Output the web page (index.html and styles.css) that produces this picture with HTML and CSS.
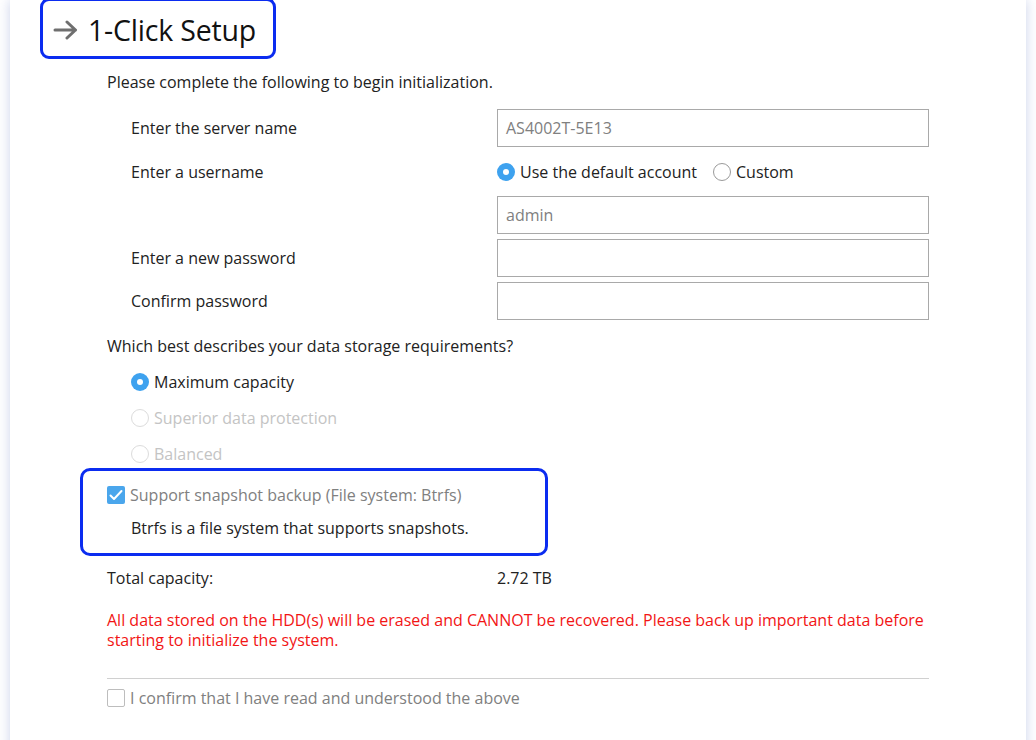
FILE: index.html
```html
<!DOCTYPE html>
<html>
<head>
<meta charset="utf-8">
<link rel="stylesheet" href="styles.css">
</head>
<body>
<div class="page">
  <div class="panel">
    <div class="title-box">
      <svg class="arrow" width="26" height="20" viewBox="0 0 26 20">
        <path d="M2 10 H22.5 M14 2 L22.5 10 L14 18" fill="none" stroke="#6f6f6f" stroke-width="3" stroke-linecap="round" stroke-linejoin="round"/>
      </svg>
      <span class="title">1-Click Setup</span>
    </div>
    <div class="content">
      <p class="intro">Please complete the following to begin initialization.</p>
      <div class="form">
        <div class="label">Enter the server name</div>
        <div class="field"><div class="input">AS4002T-5E13</div></div>
        <div class="label">Enter a username</div>
        <div class="field radios-inline">
          <span class="radio on"></span><span class="rtext">Use the default account</span>
          <span class="radio gap"></span><span class="rtext">Custom</span>
        </div>
        <div class="label"></div>
        <div class="field"><div class="input">admin</div></div>
        <div class="label">Enter a new password</div>
        <div class="field"><div class="input"></div></div>
        <div class="label">Confirm password</div>
        <div class="field"><div class="input"></div></div>
      </div>
      <p class="question">Which best describes your data storage requirements?</p>
      <div class="options">
        <div class="opt"><span class="radio on"></span><span class="otext">Maximum capacity</span></div>
        <div class="opt disabled"><span class="radio dis"></span><span class="otext">Superior data protection</span></div>
        <div class="opt disabled"><span class="radio dis"></span><span class="otext">Balanced</span></div>
      </div>
      <div class="snap-box">
        <div class="snap-row">
          <span class="check on">
            <svg width="14" height="12" viewBox="0 0 14 12"><path d="M1.5 6.5 L5 10 L12.5 2" fill="none" stroke="#fff" stroke-width="2" stroke-linecap="round" stroke-linejoin="round"/></svg>
          </span>
          <span class="snap-text">Support snapshot backup (File system: Btrfs)</span>
        </div>
        <div class="snap-desc">Btrfs is a file system that supports snapshots.</div>
      </div>
      <div class="capacity">
        <span class="cap-label">Total capacity:</span>
        <span class="cap-value">2.72 TB</span>
      </div>
      <p class="warning">All data stored on the HDD(s) will be erased and CANNOT be recovered. Please back up important data before starting to initialize the system.</p>
      <div class="divider"></div>
      <div class="confirm">
        <span class="check off"></span>
        <span class="confirm-text">I confirm that I have read and understood the above</span>
      </div>
    </div>
  </div>
</div>
</body>
</html>
```

FILE: styles.css
```css
* { box-sizing: border-box; }
html, body {
  margin: 0;
  padding: 0;
  background: #ffffff;
  font-family: "Open Sans", "Noto Sans", sans-serif;
  color: #222;
  overflow: hidden;
}
.page {
  width: 1036px;
  height: 740px;
  padding: 0 10px;
}
.panel {
  position: relative;
  background: #fff;
  height: 760px;
  box-shadow: 0 0 12px rgba(130, 148, 205, 0.42);
}
.title-box {
  position: absolute;
  left: 30px;
  top: -2px;
  width: 236px;
  height: 61px;
  border: 3px solid #0b2cf0;
  border-radius: 9px;
  background: #fff;
  display: flex;
  align-items: center;
  padding-left: 10px;
  padding-top: 2px;
}
.arrow { margin-right: 9px; }
.title {
  font-size: 28.5px;
  color: #111;
  letter-spacing: -0.2px;
}
.content {
  padding-top: 71px;
  padding-left: 97px;
  width: 928px;
}
p { margin: 0; }
.intro, .question {
  font-size: 16px;
  line-height: 22px;
  color: #222;
}
.form {
  margin-top: 16px;
  display: grid;
  grid-template-columns: 366px 432px;
  grid-template-rows: 38px 39px 38px 38px 38px;
  row-gap: 5px;
  padding-left: 24px;
}
.label {
  font-size: 16px;
  color: #222;
  display: flex;
  align-items: center;
}
.field { display: flex; align-items: center; }
.input {
  width: 432px;
  height: 38px;
  border: 1px solid #a9a9a9;
  padding: 0 8px;
  font-size: 16px;
  color: #808080;
  display: flex;
  align-items: center;
}
.radio {
  width: 18px;
  height: 18px;
  border-radius: 50%;
  display: inline-block;
  flex: none;
  position: relative;
}
.radio.on { background: #3ea2ef; }
.radio.on::after {
  content: "";
  position: absolute;
  left: 6px;
  top: 6px;
  width: 6px;
  height: 6px;
  border-radius: 50%;
  background: #fff;
}
.radio.gap {
  border: 1px solid #9a9a9a;
  margin-left: 16px;
}
.radio.dis { border: 1px solid #dcdcdc; }
.rtext {
  font-size: 16px;
  color: #222;
  margin-left: 5px;
}
.question { margin-top: 15px; }
.options {
  padding-left: 24px;
  margin-top: 7px;
}
.opt {
  height: 36px;
  display: flex;
  align-items: center;
}
.otext {
  font-size: 16px;
  margin-left: 5px;
  color: #222;
}
.opt.disabled .otext { color: #c4c4c4; }
.snap-box {
  margin-left: -27px;
  margin-top: -4px;
  width: 468px;
  height: 88px;
  border: 3px solid #0b2cf0;
  border-radius: 10px;
  padding-left: 24px;
  padding-top: 14px;
}
.snap-row {
  display: flex;
  align-items: center;
  height: 20px;
}
.check {
  width: 18px;
  height: 18px;
  border-radius: 2px;
  flex: none;
  display: inline-flex;
  align-items: center;
  justify-content: center;
}
.check.on { background: #4aa6ec; }
.check.off { border: 1px solid #bdbdbd; }
.snap-text {
  font-size: 16px;
  color: #808080;
  margin-left: 5px;
}
.snap-desc {
  font-size: 16px;
  color: #222;
  margin-left: 24px;
  margin-top: 12px;
}
.capacity {
  margin-top: 11px;
  display: flex;
  height: 22px;
  align-items: center;
  font-size: 16px;
  color: #222;
}
.cap-label { width: 390px; }
.warning {
  margin-top: 21px;
  font-size: 16px;
  line-height: 20px;
  color: #f21515;
  width: 822px;
}
.divider {
  margin-top: 28px;
  width: 822px;
  height: 1px;
  background: #d0d0d0;
}
.confirm {
  margin-top: 9px;
  display: flex;
  align-items: center;
  height: 20px;
}
.confirm-text {
  font-size: 16px;
  color: #808080;
  margin-left: 5px;
}
```
